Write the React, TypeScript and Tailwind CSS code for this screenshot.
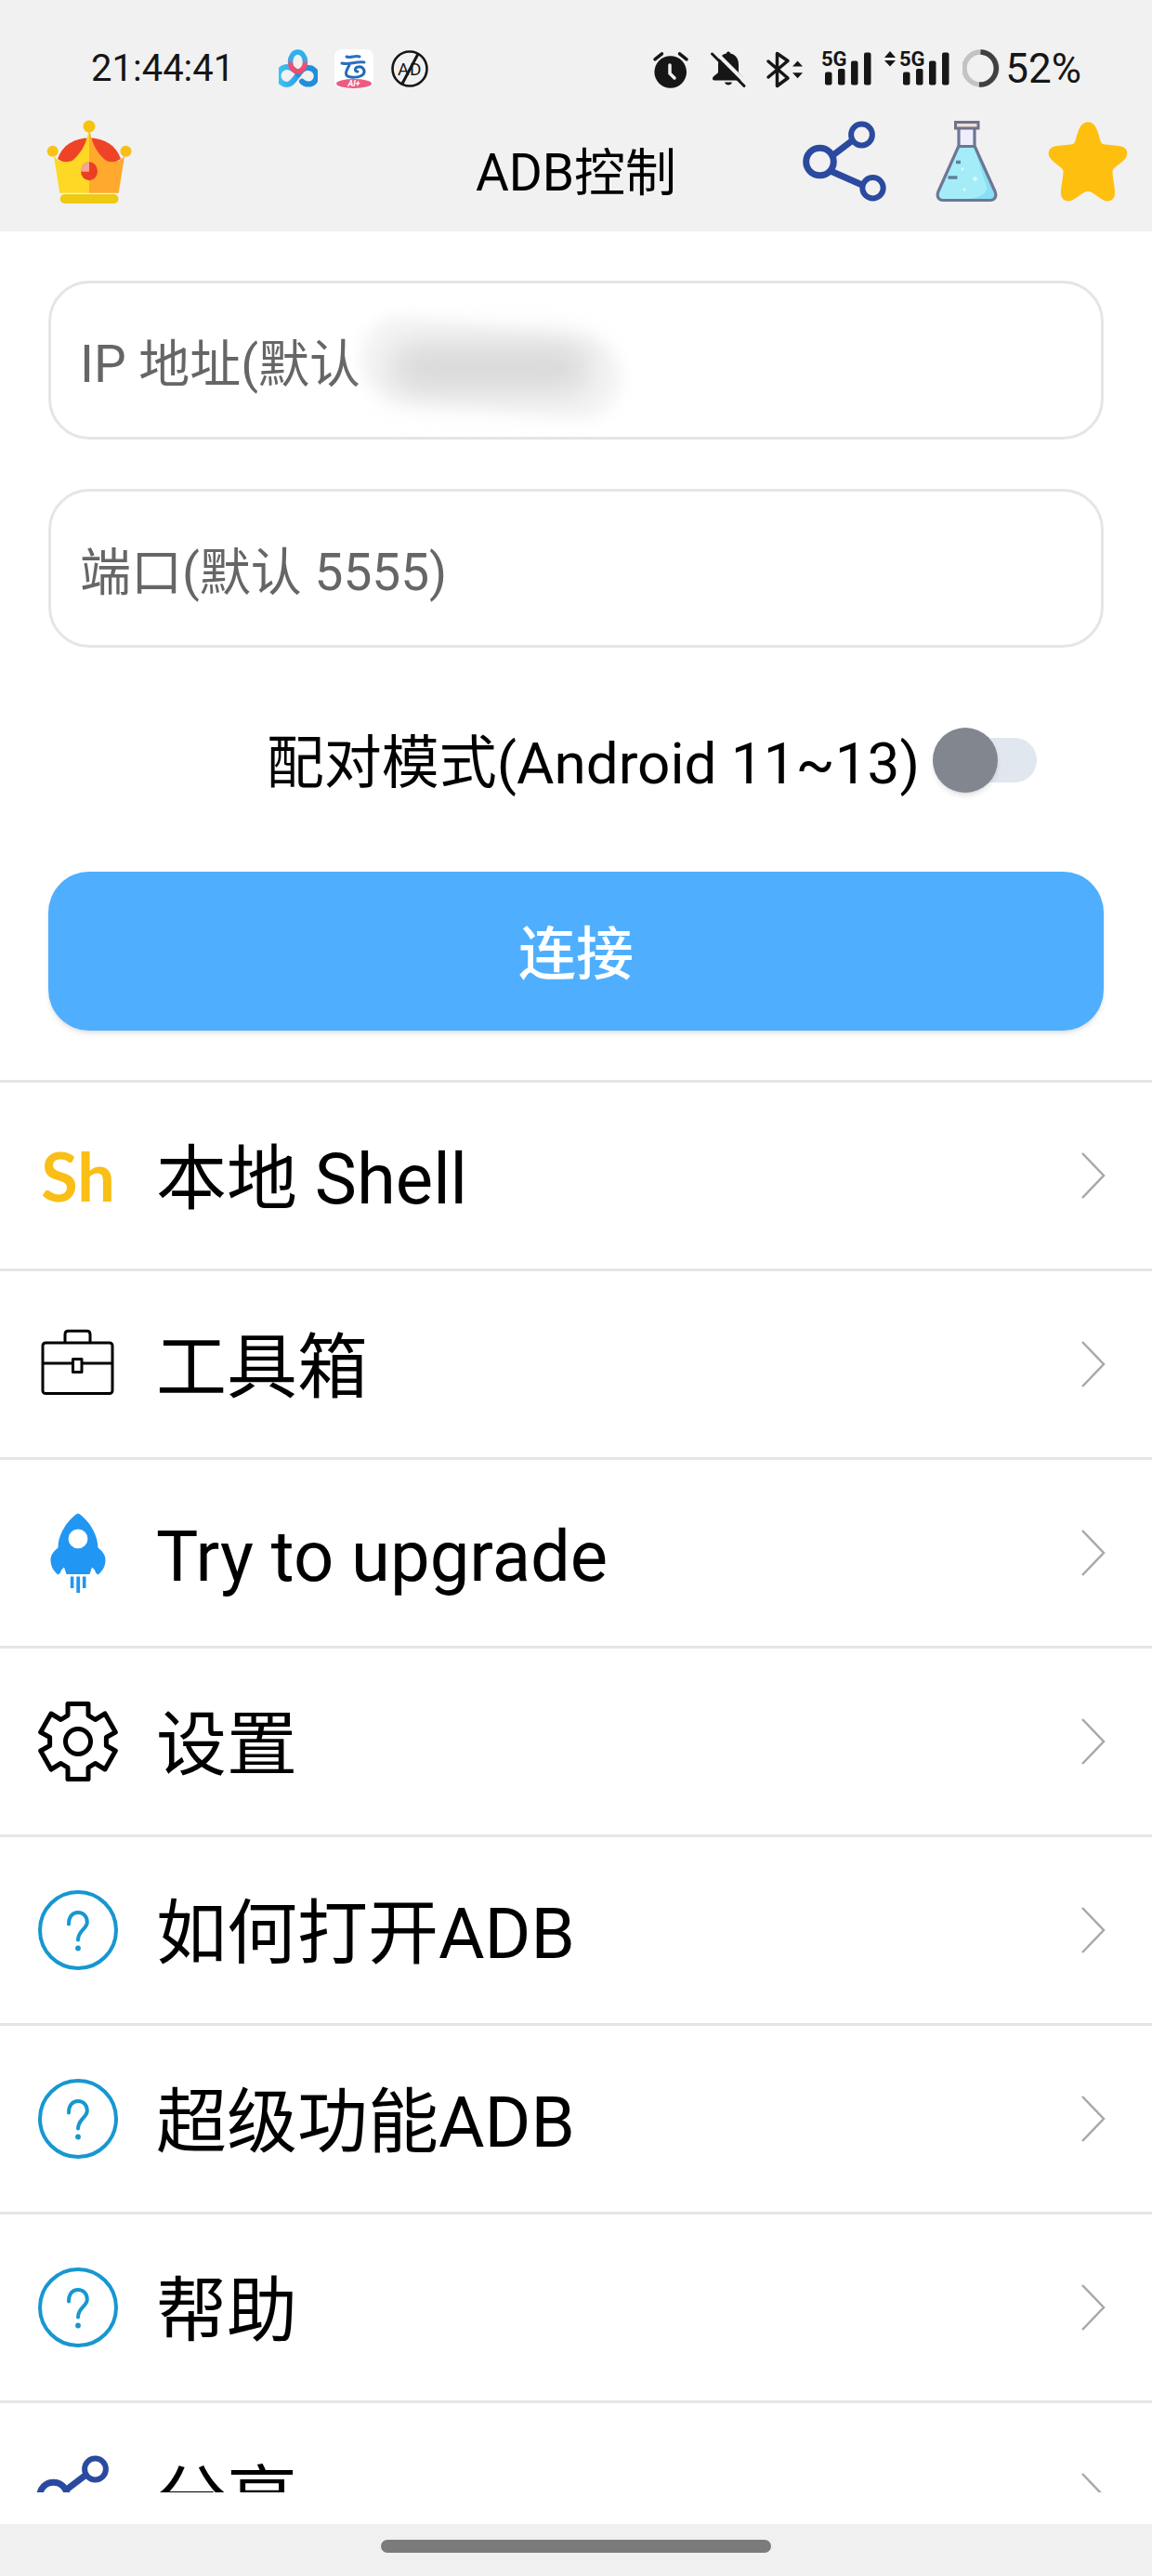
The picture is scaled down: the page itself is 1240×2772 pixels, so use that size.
import { useState } from 'react'
import type { ReactNode } from 'react'

interface MenuItem {
    id: string;
    label: string;
    icon: ReactNode;
}

/* ---------- status bar icons ---------- */

const NetdiskIcon = () => (
    <svg className="h-[42px] w-[42px]" viewBox="0 0 42 42" fill="none">
        <defs>
            <linearGradient id="diskTop" x1="0" y1="0" x2="0" y2="1">
                <stop offset="0" stopColor="#27b5ef" />
                <stop offset="0.45" stopColor="#4aa3dc" />
                <stop offset="0.6" stopColor="#ef5273" />
                <stop offset="1" stopColor="#f04c6c" />
            </linearGradient>
            <linearGradient id="diskLeft" x1="0" y1="0" x2="1" y2="0">
                <stop offset="0" stopColor="#3cc4f5" />
                <stop offset="1" stopColor="#2f9fe6" />
            </linearGradient>
        </defs>
        <path d="M21 26C17 22 13 19 9 19a9 9 0 1 0 0 19C14 38 17 32 22 26" stroke="url(#diskLeft)" strokeWidth="6" />
        <path d="M21 27c4-5 7-8 11-7a8.600 8.600 0 0 1 0 17.600c-3 0-5-1-7-3" stroke="#1f8fdc" strokeWidth="6" strokeLinecap="round" />
        <ellipse cx="20.500" cy="13.500" rx="8" ry="10.500" stroke="url(#diskTop)" strokeWidth="5.500" />
    </svg>
)

const CloudAppIcon = () => (
    <svg className="h-[42px] w-[42px]" viewBox="0 0 42 42">
        <rect width="42" height="42" rx="8" fill="#fff" />
        <path d="M13 8c5 2 9-2 14 0M8 15c8 2 14-2 24-1" fill="none" stroke="#2a72bf" strokeWidth="3" strokeLinecap="round" />
        <path d="M16 17c-2 4-5 8-3 11 3 3 14 3 18-1 3-4-1-9-5-8-4 0-5 5-1 5" fill="none" stroke="#2569b8" strokeWidth="3" strokeLinecap="round" />
        <ellipse cx="21" cy="37" rx="19" ry="5" fill="#ed5b85" />
        <text x="21" y="40" textAnchor="middle" fill="#fff" fontSize="9" fontWeight="700" fontStyle="italic" fontFamily="Roboto, sans-serif">AI+</text>
    </svg>
)

const AdBlockIcon = () => (
    <svg className="h-[42px] w-[42px]" viewBox="0 0 42 42">
        <circle cx="21" cy="21" r="18.500" fill="none" stroke="#161616" strokeWidth="2.600" />
        <text x="8" y="28" fill="#161616" fontSize="19" fontFamily="Roboto, sans-serif">A</text>
        <text x="21" y="28" fill="#161616" fontSize="19" fontFamily="Roboto, sans-serif">D</text>
        <path d="M30 5 13 37" stroke="#161616" strokeWidth="3" />
    </svg>
)

const AlarmIcon = () => (
    <svg className="h-[42px] w-12" viewBox="0 0 48 42" fill="none" strokeLinecap="round" strokeLinejoin="round">
        <circle cx="23.700" cy="24.500" r="17.300" fill="#161616" />
        <path d="m7 10.800 7.500-6M33.500 4.800l7.500 6" stroke="#161616" strokeWidth="3.500" />
        <path d="M23 17v9l5 5" stroke="#f1f1f1" strokeWidth="3.500" />
    </svg>
)

const BellOffIcon = () => (
    <svg className="h-[42px] w-12" viewBox="0 0 48 42">
        <path d="M24 2.500c1.500 0 2 1 2 2 6 1 9 6 9 12v8c0 2 5 4 5 7 0 1.500-1 2-2 2H9c-1.500 0-2-1-2-2 0-3 6-5 6-7v-8c0-6 3-11 9-12 0-1 .5-2 2-2Z" fill="#161616" />
        <path d="M20 35.500h8c-1 4-7 4-8 0Z" fill="#161616" />
        <path d="m9 2 36 36" stroke="#f1f1f1" strokeWidth="4" />
        <path d="m6.500 5 34.500 34.500" stroke="#161616" strokeWidth="3" strokeLinecap="round" />
    </svg>
)

const BluetoothIcon = () => (
    <svg className="h-[42px] w-12" viewBox="0 0 48 42" fill="none" strokeLinejoin="round" strokeLinecap="round">
        <path d="M5 13 26 31 14.500 39.500V4.500L26 12.500 5 30" stroke="#161616" strokeWidth="3.500" />
        <path d="m36.500 12.500 5.500 6H31zM36.500 31.300l5.500-6H31z" fill="#161616" />
    </svg>
)

const SignalBars = () => (
    <g fill="#161616">
        <text x="0" y="18" fontSize="22" fontWeight="700" fontFamily="Roboto, sans-serif">5G</text>
        <rect x="4" y="24.500" width="7.500" height="14" rx="2" />
        <rect x="18" y="21" width="7.500" height="17.500" rx="2" />
        <rect x="32" y="12.500" width="7.500" height="26" rx="2" />
        <rect x="46" y="3.500" width="7.500" height="35" rx="2" />
    </g>
)

const SignalIcon = () => (
    <svg className="h-[42px] w-[54px] overflow-visible" viewBox="0 0 54 42">
        <SignalBars />
    </svg>
)

const SignalDataIcon = () => (
    <svg className="h-[42px] w-[70px] overflow-visible" viewBox="0 0 70 42">
        <path d="m6 2 6 7H0zM6 18.500l6-6.500H0z" fill="#161616" />
        <g transform="translate(16 0)">
            <SignalBars />
        </g>
    </svg>
)

const BatteryIcon = () => (
    <svg className="h-[42px] w-10" viewBox="0 0 40 42" fill="none" strokeWidth="5.500">
        <circle cx="19.500" cy="20.500" r="17.500" stroke="#c3c3c3" />
        <path d="M19.500 3a17.500 17.500 0 1 1-1.500 35" stroke="#404040" />
    </svg>
)

/* ---------- app bar icons ---------- */

const CrownIcon = () => (
    <svg className="size-[88px] overflow-visible" viewBox="0 0 88 88">
        <path d="M10 41C15 26 28 18.500 44 18.500S73 26 78 41l-12 7H22z" fill="#ef4328" />
        <path d="M6 38c2 2 3 3 5 4.500C17 45 24 45 28 41c7-7 11-13 14-24l1.500-6h.5v66.700H12.300z" fill="#fed824" />
        <path d="M82 38c-2 2-3 3-5 4.500-6 2.500-13 2.500-17-1.500-7-7-11-13-14-24l-1.500-6H44v66.700h31.700z" fill="#ffa92d" />
        <circle cx="44" cy="6" r="6.500" fill="#f5c20d" />
        <circle cx="4.700" cy="32.700" r="6" fill="#f8c316" />
        <circle cx="83.500" cy="32.700" r="6" fill="#f8bd16" />
        <ellipse cx="44" cy="54.300" rx="9" ry="10" fill="#e93f24" />
        <path d="M44 44.300v10.500h-9c0-6 4-10.500 9-10.500Z" fill="#f7a597" />
        <rect x="12.700" y="79" width="62.800" height="10" rx="5" fill="#efc912" />
    </svg>
)

const ShareIcon = () => (
    <svg className="size-[88px] overflow-visible" viewBox="0 0 88 88" fill="none" stroke="#2b4a9f">
        <path d="m29 39 25-19M29 54l34 15" strokeWidth="7" />
        <circle cx="17.500" cy="44" r="14.800" strokeWidth="7" />
        <circle cx="62.500" cy="15" r="11.400" strokeWidth="6" />
        <circle cx="74.500" cy="72.300" r="11.200" strokeWidth="6" />
    </svg>
)

const FlaskIcon = () => (
    <svg className="size-[88px] overflow-visible" viewBox="0 0 88 88">
        <path d="M36 9h17v18l22 49c2 5 0 9-5 9H19c-5 0-7-4-5-9l22-49z" fill="#edf0fc" />
        <path d="M36.500 28h16l22 49c2 5 0 8-5 8h-50c-5 0-7-3-5-8z" fill="#a4edf8" />
        <path d="M52.500 28l22 49c2 5 0 8-5 8H38c22-2 32-7 27-17z" fill="#86dff2" />
        <path d="M36 9v18L14 76c-2 5 0 9.500 5 9.500h51c5 0 7-4.500 5-9.500L53 27V9M36 27.500h17" fill="none" stroke="#6d7794" strokeWidth="3.200" strokeLinejoin="round" />
        <rect x="32.500" y="1.500" width="24.500" height="6.500" fill="#eadfd8" stroke="#746f8a" strokeWidth="3" />
        <path d="M33 44.500h5M24.500 61h10" stroke="#5f7f9e" strokeWidth="3.500" />
        <circle cx="40" cy="52" r="1.500" fill="#dcfaff" />
        <circle cx="53.500" cy="62.500" r="2.200" fill="#dcfaff" />
        <circle cx="42" cy="74" r="1.500" fill="#dcfaff" />
    </svg>
)

const StarIcon = () => (
    <svg className="size-[88px] overflow-visible" viewBox="0 0 88 88">
        <path
            d="M44 1.300c5 0 7.500 3.700 9.500 7.700 3.500 8 3.500 15 6.500 16 6 1.500 14 1 20 2.500 6 1.500 8.500 7.500 4 13.500-4 5-13 9-13.500 13 0 8 3 18 2.500 25-.5 6-6 9-12 6.500-6-3-12-9.500-17-9.500s-11 6.500-17 9.500c-6 2.500-11.500-.5-12-6.500-.5-7 2.500-17 2.500-25C17 50 8 46 4 41c-4.500-6-2-12 4-13.500 6-1.500 14-1 20-2.500 3-1 3-8 6.500-16 2-4 4.500-7.700 9.500-7.700Z"
            fill="#febf0f"
        />
    </svg>
)

/* ---------- menu icons ---------- */

const ToolboxIcon = () => (
    <svg className="size-[88px]" viewBox="0 0 88 88" fill="none" stroke="#000" strokeWidth="3" strokeLinejoin="round">
        <rect x="6" y="21" width="75" height="54.500" rx="3" />
        <path d="M30 21V12c0-2.500 1-3.700 3.500-3.700h20c2.500 0 3.500 1.200 3.500 3.700v9M6 43h31.500M49 43h32" />
        <rect x="38.500" y="38.500" width="9.500" height="14" />
    </svg>
)

const RocketIcon = () => (
    <svg className="size-[88px]" viewBox="0 0 88 88" fill="#2196f3">
        <path
            fillRule="evenodd"
            d="M44 1.500c2 0 21 15 21.500 37 5 4 8 8 8 13 0 7-3 12-8 16-2-1-3-3-3.500-5l-3-3-2.500 7.500h-25L29 59.500l-3 3c-.5 2-1.500 4-3.500 5-5-4-8-9-8-16 0-5 3-9 8-13C23 16.500 42 1.500 44 1.500Zm0 17A10.400 10.400 0 1 0 44 39.300 10.400 10.400 0 1 0 44 18.500Z"
        />
        <rect x="35.800" y="69.500" width="3.600" height="12.500" />
        <rect x="42.300" y="69.500" width="3.800" height="17.500" />
        <rect x="48.900" y="69.500" width="3.600" height="12.500" />
    </svg>
)

const GearIcon = () => (
    <svg className="size-[88px]" viewBox="0 0 88 88" fill="none" stroke="#000" strokeWidth="5" strokeLinejoin="round">
        <path d="M33 3.500h22v12.300l7.500 4.700L73 14l11.300 20-9.900 5.500v9l9.900 5.500L73 74l-10.500-6.500-7.500 4.700v12.300H33V72.200l-7.500-4.700L15 74 3.700 54l9.900-5.500v-9L3.700 34 15 14l10.500 6.500 7.500-4.700z" />
        <circle cx="44" cy="44" r="13.500" />
    </svg>
)

const HelpIcon = () => (
    <svg className="size-[88px]" viewBox="0 0 88 88" fill="none" stroke="#1797d0" strokeWidth="4" strokeLinecap="round">
        <circle cx="44" cy="44" r="41" />
        <path d="M34 37.500c0-8 4-12.500 10-12.500s9.800 4.500 9.800 10.500c0 7-9.800 9-9.800 19" />
        <circle cx="44" cy="63.500" r="2.900" fill="#1797d0" stroke="none" />
    </svg>
)

const ChevronIcon = () => (
    <svg className="h-[50px] w-[26px] shrink-0" viewBox="0 0 26 50" fill="none" stroke="#a8a8a8" strokeWidth="2.500">
        <path d="m1 1 23 24L1 49" />
    </svg>
)

const menuItems: MenuItem[] = [
    { id: 'shell', label: '本地 Shell', icon: <span className="font-[Lato,sans-serif] text-[72px] leading-none font-bold text-[#f9bf16]">Sh</span> },
    { id: 'toolbox', label: '工具箱', icon: <ToolboxIcon /> },
    { id: 'upgrade', label: 'Try to upgrade', icon: <RocketIcon /> },
    { id: 'settings', label: '设置', icon: <GearIcon /> },
    { id: 'open-adb', label: '如何打开ADB', icon: <HelpIcon /> },
    { id: 'super-adb', label: '超级功能ADB', icon: <HelpIcon /> },
    { id: 'help', label: '帮助', icon: <HelpIcon /> },
    { id: 'share', label: '分享', icon: <ShareIcon /> },
]

const StatusBar = () => (
    <div className="flex h-[99px] items-center justify-between pt-[49px] pr-[76px] pl-[98px] text-[#161616]">
        <div className="flex items-center">
            <span className="text-[40px] leading-none">21:44:41</span>
            <div className="ml-12 flex items-center gap-[18px]">
                <NetdiskIcon />
                <CloudAppIcon />
                <AdBlockIcon />
            </div>
        </div>
        <div className="flex items-center gap-[14px]">
            <AlarmIcon />
            <BellOffIcon />
            <BluetoothIcon />
            <SignalIcon />
            <SignalDataIcon />
            <div className="flex items-center gap-1.5">
                <BatteryIcon />
                <span className="text-[44px] leading-none">52%</span>
            </div>
        </div>
    </div>
)

const AppBar = () => (
    <div className="grid h-[150px] grid-cols-[1fr_auto_1fr] items-center px-1">
        <div className="flex pl-[26px]">
            <button type="button" aria-label="VIP" className="flex w-[131px] justify-center">
                <CrownIcon />
            </button>
        </div>
        <h1 className="pt-6 text-[55px] leading-none">ADB控制</h1>
        <div className="flex justify-end">
            <button type="button" aria-label="分享" className="flex w-[131px] justify-center">
                <ShareIcon />
            </button>
            <button type="button" aria-label="实验室" className="flex w-[131px] justify-center">
                <FlaskIcon />
            </button>
            <button type="button" aria-label="收藏" className="flex w-[131px] justify-center">
                <StarIcon />
            </button>
        </div>
    </div>
)

const ConnectForm = () => {
    const [ip, setIp] = useState('')
    const [port, setPort] = useState('')
    const [pairing, setPairing] = useState(false)

    return (
        <form className="flex flex-col px-[52px] py-[53px]" onSubmit={(e) => e.preventDefault()}>
            <div className="relative">
                <input
                    type="text"
                    aria-label="IP 地址"
                    placeholder="IP 地址(默认"
                    value={ip}
                    onChange={(e) => setIp(e.target.value)}
                    className="h-[171px] w-full rounded-[44px] border-3 border-[#e5e5e5] px-[31px] pt-2 text-[55px] outline-none placeholder:text-[#666]"
                />
                {/* smudge hiding the default address */}
                {!ip && (
                    <div className="pointer-events-none absolute top-[48px] left-[334px] flex h-[92px] w-[284px] rotate-6 items-center justify-center rounded-full bg-[#f5f5f5] blur-sm">
                        <div className="h-14 w-[220px] -rotate-6 rounded-full bg-[#d9d9d9] blur-lg" />
                    </div>
                )}
            </div>
            <input
                type="text"
                aria-label="端口"
                placeholder="端口(默认 5555)"
                value={port}
                onChange={(e) => setPort(e.target.value)}
                className="mt-[53px] h-[171px] w-full rounded-[44px] border-3 border-[#e5e5e5] px-[31px] pt-2 text-[55px] outline-none placeholder:text-[#666]"
            />
            <label className="flex h-[241px] items-center justify-end gap-[14px] pr-[72px] text-[62px]">
                <span className="pt-2">配对模式(Android 11~13)</span>
                <input
                    type="checkbox"
                    role="switch"
                    checked={pairing}
                    onChange={(e) => setPairing(e.target.checked)}
                    className="flex h-12 w-28 appearance-none items-center rounded-full bg-[#e1e7ee] before:size-[70px] before:shrink-0 before:rounded-full before:bg-[#82868f] before:shadow-md checked:justify-end checked:before:bg-[#4faefe]"
                />
            </label>
            <button type="submit" className="h-[171px] rounded-[44px] bg-[#4faffe] pt-2 text-[62px] font-medium text-white shadow-md">
                连接
            </button>
        </form>
    )
}

const MenuRow = ({ item }: { item: MenuItem }) => (
    <li className="border-t-3 border-[#e5e5e5]">
        <a href={`#${item.id}`} className="flex h-[200px] items-center pr-[50px] pl-10">
            <span className="flex w-[88px] shrink-0 justify-center">{item.icon}</span>
            <span className="ml-10 flex-1 pt-2 text-[76px] leading-none">{item.label}</span>
            <ChevronIcon />
        </a>
    </li>
)

const App = () => {
    return (
        <div className="flex h-screen flex-col bg-white font-[Roboto,'Noto_Sans_CJK_SC',sans-serif] text-black">
            <header className="shrink-0 bg-[#f1f1f1]">
                <StatusBar />
                <AppBar />
            </header>
            <main className="min-h-0 flex-1 overflow-hidden">
                <ConnectForm />
                <ul>
                    {menuItems.map((item) => (
                        <MenuRow key={item.id} item={item} />
                    ))}
                </ul>
            </main>
            <footer className="mt-[34px] flex h-14 shrink-0 justify-center bg-[#f0f0f0] pt-[17px]">
                <div className="h-[14px] w-[420px] rounded-full bg-[#7b7b7b]" />
            </footer>
        </div>
    )
}

export default App
